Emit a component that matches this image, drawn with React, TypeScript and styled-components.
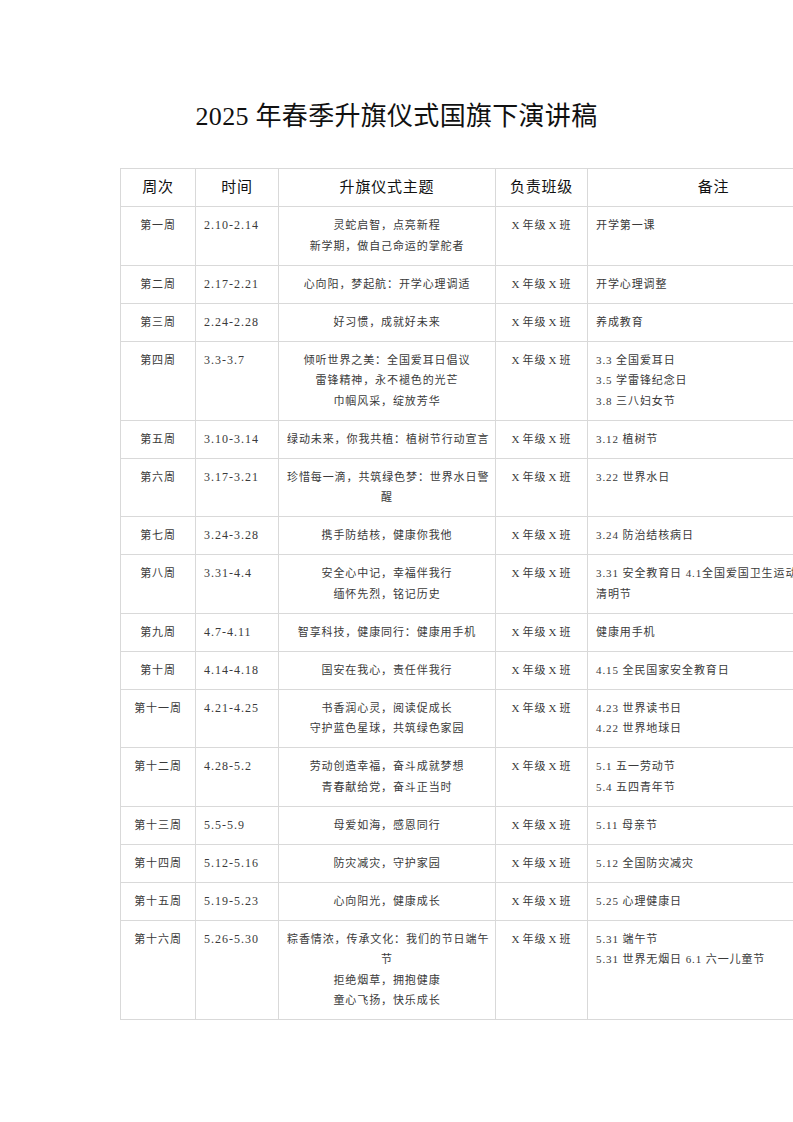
import React from "react";
import styled, { createGlobalStyle } from "styled-components";

const GlobalStyle = createGlobalStyle`
  html, body {
    margin: 0;
    padding: 0;
    background: #ffffff;
    overflow: hidden;
  }
  body {
    font-family: "Liberation Serif", "Noto Sans CJK SC", serif;
  }
`;

const Page = styled.div`
  width: 793px;
  min-height: 1122px;
  padding-top: 100px;
  box-sizing: border-box;
  overflow: hidden;
`;

const Title = styled.h1`
  margin: 0 0 34px 0;
  text-align: center;
  font-family: "Liberation Serif", "Noto Sans CJK SC", serif;
  font-size: 26px;
  line-height: 34px;
  font-weight: 400;
  letter-spacing: 0.3px;
  color: #111;
  white-space: nowrap;
`;

const Table = styled.table`
  margin-left: 120px;
  width: 839px;
  border-collapse: collapse;
  table-layout: fixed;
`;

const Col = styled.col<{ $w: number }>`
  width: ${(p) => p.$w}px;
`;

const HeadCell = styled.th<{ $padRight?: number }>`
  border: 1px solid #d9d9d9;
  padding: 8px ${(p) => p.$padRight ?? 8}px 8px 8px;
  font-size: 15px;
  line-height: 21px;
  letter-spacing: 0.8px;
  font-weight: 400;
  color: #111;
  text-align: center;
  white-space: nowrap;
`;

const Cell = styled.td<{ $align: "left" | "center" }>`
  border: 1px solid #d9d9d9;
  padding: 8px 8px 8.5px 8px;
  vertical-align: top;
  text-align: ${(p) => p.$align};
  font-size: 11px;
  line-height: 20.5px;
  letter-spacing: 0.9px;
  color: #3a3a3a;
  white-space: nowrap;
`;

const DateCell = styled(Cell)`
  font-size: 12px;
  letter-spacing: 1px;
`;

const ClassCell = styled(Cell)`
  word-spacing: -1.5px;
`;

const Line = styled.div`
  white-space: nowrap;
`;

type Row = {
  week: string;
  date: string;
  theme: string[];
  notes: string[];
};

const rows: Row[] = [
  { week: "第一周", date: "2.10-2.14", theme: ["灵蛇启智，点亮新程", "新学期，做自己命运的掌舵者"], notes: ["开学第一课"] },
  { week: "第二周", date: "2.17-2.21", theme: ["心向阳，梦起航：开学心理调适"], notes: ["开学心理调整"] },
  { week: "第三周", date: "2.24-2.28", theme: ["好习惯，成就好未来"], notes: ["养成教育"] },
  {
    week: "第四周",
    date: "3.3-3.7",
    theme: ["倾听世界之美：全国爱耳日倡议", "雷锋精神，永不褪色的光芒", "巾帼风采，绽放芳华"],
    notes: ["3.3 全国爱耳日", "3.5 学雷锋纪念日", "3.8 三八妇女节"],
  },
  { week: "第五周", date: "3.10-3.14", theme: ["绿动未来，你我共植：植树节行动宣言"], notes: ["3.12 植树节"] },
  { week: "第六周", date: "3.17-3.21", theme: ["珍惜每一滴，共筑绿色梦：世界水日警", "醒"], notes: ["3.22 世界水日"] },
  { week: "第七周", date: "3.24-3.28", theme: ["携手防结核，健康你我他"], notes: ["3.24 防治结核病日"] },
  {
    week: "第八周",
    date: "3.31-4.4",
    theme: ["安全心中记，幸福伴我行", "缅怀先烈，铭记历史"],
    notes: ["3.31 安全教育日 4.1全国爱国卫生运动月", "清明节"],
  },
  { week: "第九周", date: "4.7-4.11", theme: ["智享科技，健康同行：健康用手机"], notes: ["健康用手机"] },
  { week: "第十周", date: "4.14-4.18", theme: ["国安在我心，责任伴我行"], notes: ["4.15 全民国家安全教育日"] },
  {
    week: "第十一周",
    date: "4.21-4.25",
    theme: ["书香润心灵，阅读促成长", "守护蓝色星球，共筑绿色家园"],
    notes: ["4.23 世界读书日", "4.22 世界地球日"],
  },
  {
    week: "第十二周",
    date: "4.28-5.2",
    theme: ["劳动创造幸福，奋斗成就梦想", "青春献给党，奋斗正当时"],
    notes: ["5.1 五一劳动节", "5.4 五四青年节"],
  },
  { week: "第十三周", date: "5.5-5.9", theme: ["母爱如海，感恩同行"], notes: ["5.11 母亲节"] },
  { week: "第十四周", date: "5.12-5.16", theme: ["防灾减灾，守护家园"], notes: ["5.12 全国防灾减灾"] },
  { week: "第十五周", date: "5.19-5.23", theme: ["心向阳光，健康成长"], notes: ["5.25 心理健康日"] },
  {
    week: "第十六周",
    date: "5.26-5.30",
    theme: ["粽香情浓，传承文化：我们的节日端午", "节", "拒绝烟草，拥抱健康", "童心飞扬，快乐成长"],
    notes: ["5.31 端午节", "5.31 世界无烟日 6.1 六一儿童节"],
  },
];

const colWidths = [75, 83, 217, 92, 372];

export default function App() {
  return (
    <>
      <GlobalStyle />
      <Page>
        <Title>2025 年春季升旗仪式国旗下演讲稿</Title>
        <Table>
          <colgroup>
            {colWidths.map((w, i) => (
              <Col key={i} $w={w} />
            ))}
          </colgroup>
          <thead>
            <tr>
              <HeadCell>周次</HeadCell>
              <HeadCell>时间</HeadCell>
              <HeadCell>升旗仪式主题</HeadCell>
              <HeadCell>负责班级</HeadCell>
              <HeadCell $padRight={128}>备注</HeadCell>
            </tr>
          </thead>
          <tbody>
            {rows.map((r) => (
              <tr key={r.week}>
                <Cell $align="center">{r.week}</Cell>
                <DateCell $align="left">{r.date}</DateCell>
                <Cell $align="center">
                  {r.theme.map((t, i) => (
                    <Line key={i}>{t}</Line>
                  ))}
                </Cell>
                <ClassCell $align="center">X 年级 X 班</ClassCell>
                <Cell $align="left">
                  {r.notes.map((t, i) => (
                    <Line key={i}>{t}</Line>
                  ))}
                </Cell>
              </tr>
            ))}
          </tbody>
        </Table>
      </Page>
    </>
  );
}
